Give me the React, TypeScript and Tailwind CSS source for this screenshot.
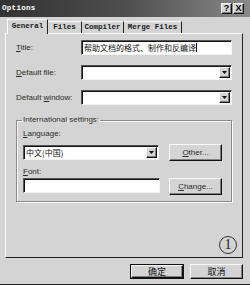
import React from 'react';

const sunken =
  'bg-white border border-t-[#555] border-l-[#555] border-b-[#f4f4f4] border-r-[#f4f4f4] shadow-[inset_1px_1px_0_#111]';
const raised =
  'bg-[#d4d4d4] border border-t-[#fafafa] border-l-[#fafafa] border-b-[#111] border-r-[#111] shadow-[inset_-1px_-1px_0_#808080]';
const label = "text-[8px] leading-[10px] text-[#2a2a2a] font-['Liberation_Sans',sans-serif]";
const cjk = "font-['Noto_Sans_CJK_SC',sans-serif]";
const mono = "font-['Liberation_Mono',monospace] font-bold";

function DropArrow() {
  return (
    <div className={`${raised} w-[11px] h-[11px] mr-[1px] flex items-center justify-center`}>
      <svg width="5" height="3" viewBox="0 0 5 3">
        <path d="M0 0H5L2.5 3Z" fill="#111" />
      </svg>
    </div>
  );
}

function Combo({ className = '', children }: { className?: string; children?: React.ReactNode }) {
  return (
    <div className={`${sunken} h-[15px] flex items-center justify-between ${className}`}>
      <span className={`${cjk} text-[8px] leading-[10px] text-[#111] pl-[2px]`}>{children}</span>
      <DropArrow />
    </div>
  );
}

function Row({ children, text }: { children: React.ReactNode; text: React.ReactNode }) {
  return (
    <div className="flex items-center h-[15px]">
      <span className={`${label} w-[65px]`}>{text}</span>
      {children}
    </div>
  );
}

function Tab({ text, active }: { text: string; active?: boolean }) {
  return (
    <div
      className={`${mono} text-[7.5px] text-[#1a1a1a] flex items-center justify-center border-r border-r-[#222] ${
        active
          ? 'h-[15px] mb-[-1px] bg-[#d4d4d4] border-t border-l border-t-[#fafafa] border-l-[#fafafa] relative z-10'
          : 'h-[12px] border-t border-t-[#fafafa]'
      }`}
    >
      {text}
    </div>
  );
}

export default function App() {
  return (
    <div className="w-[250px] h-[285px] bg-[#d4d4d4] flex flex-col border-b border-b-[#222] overflow-hidden">
      <div className="h-[17px] bg-gradient-to-r from-[#333] via-[#4e4e4e] to-[#8a8a8a] flex items-center justify-between px-[2px]">
        <span className={`${mono} text-[7.5px] text-white tracking-[0.3px]`}>Options</span>
        <div className="flex mr-[4px]">
          <div className={`${raised} w-[11px] h-[11px] flex items-center justify-center text-[9px] leading-none font-bold font-['Liberation_Sans',sans-serif]`}>?</div>
          <div className={`${raised} w-[11px] h-[11px] flex items-center justify-center text-[9px] leading-none font-bold font-['Liberation_Sans',sans-serif] ml-[1px]`}>X</div>
        </div>
      </div>

      <div className="flex items-end h-[16px] pl-[7px]">
        <div className="w-[41px]"><Tab text="General" active /></div>
        <div className="w-[34px]"><Tab text="Files" /></div>
        <div className="w-[42px]"><Tab text="Compiler" /></div>
        <div className="w-[58px]"><Tab text="Merge Files" /></div>
      </div>

      <div className="ml-[5px] w-[238px] h-[225px] border border-t-[#fafafa] border-l-[#fafafa] border-b-[#222] border-r-[#222] flex flex-col pl-[10px] pt-[6px]">
        <Row text={<><u>T</u>itle:</>}>
          <div className={`${sunken} w-[151px] h-[15px] flex items-center`}>
            <span className={`${cjk} text-[8px] leading-[10px] text-[#111] pl-[2px]`}>帮助文档的格式、制作和反编译</span>
            <span className="w-[1px] h-[9px] bg-[#111]" />
          </div>
        </Row>
        <div className="mt-[10px]">
          <Row text={<><u>D</u>efault file:</>}>
            <Combo className="w-[151px]" />
          </Row>
        </div>
        <div className="mt-[10px]">
          <Row text={<>Default <u>w</u>indow:</>}>
            <Combo className="w-[151px]" />
          </Row>
        </div>

        <fieldset className="mt-[10px] w-[216px] border border-[#8a8a8a] shadow-[inset_1px_1px_0_#fafafa,1px_1px_0_#fafafa] pl-[6px] pb-[6px]">
          <legend className={`${label} px-[1px] ml-[-1px]`}>International settings:</legend>
          <div className={`${label} mt-[4px]`}><u>L</u>anguage:</div>
          <div className="flex items-center h-[17px] mt-[5px]">
            <Combo className="w-[136px]">中文(中国)</Combo>
            <div className={`${raised} ml-[10px] w-[53px] h-[17px] flex items-center justify-center ${label}`}><u>O</u>ther...</div>
          </div>
          <div className={`${label} mt-[6px]`}><u>F</u>ont:</div>
          <div className="flex items-start h-[17px] mt-[1px]">
            <div className={`${sunken} w-[137px] h-[15px]`} />
            <div className={`${raised} ml-[9px] w-[53px] h-[17px] flex items-center justify-center ${label}`}><u>C</u>hange...</div>
          </div>
        </fieldset>

        <div className="flex justify-end pr-[5px] mt-[34px]">
          <div className="w-[18px] h-[18px] rounded-full border border-[#333] flex items-center justify-center text-[14px] leading-none text-[#222] font-['Liberation_Serif',serif]">1</div>
        </div>
      </div>

      <div className="flex justify-end gap-[6px] pr-[7px] mt-[6px]">
        <div className="w-[54px] h-[15px] border border-[#111] flex">
          <div className={`${raised} flex-1 flex items-center justify-center ${cjk} text-[9px] leading-none text-[#111]`}>确定</div>
        </div>
        <div className={`${raised} w-[53px] h-[15px] flex items-center justify-center ${cjk} text-[9px] leading-none text-[#111]`}>取消</div>
      </div>
    </div>
  );
}
